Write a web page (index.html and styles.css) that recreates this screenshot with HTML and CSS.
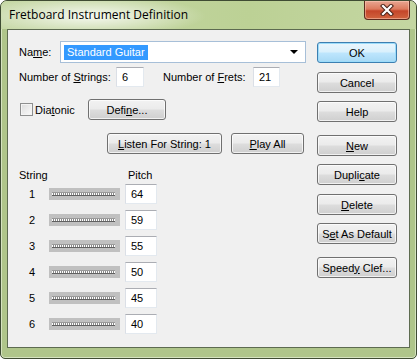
FILE: index.html
```html
<!DOCTYPE html>
<html>
<head>
<meta charset="utf-8">
<link rel="stylesheet" href="styles.css">
</head>
<body>
<div class="window">
  <div class="titlebar">
    <span class="title">Fretboard Instrument Definition</span>
    <div class="close">
      <svg width="16" height="12" viewBox="0 0 16 12">
        <path d="M4 2 L12 10 M12 2 L4 10" stroke="#4a2318" stroke-width="4.2" stroke-linecap="square" fill="none"/>
        <path d="M4 2 L12 10 M12 2 L4 10" stroke="#ffffff" stroke-width="2.2" stroke-linecap="square" fill="none"/>
      </svg>
    </div>
  </div>
  <div class="client">
    <div class="left">
      <div class="row name-row">
        <span class="lbl name-lbl">Na<u>m</u>e:</span>
        <div class="combo">
          <span class="sel">Standard Guitar</span>
          <span class="arrow"></span>
        </div>
      </div>
      <div class="row counts">
        <span class="lbl strings-lbl">Number of <u>S</u>trings:</span>
        <div class="field w-strings">6</div>
        <span class="lbl frets-lbl">Number of <u>F</u>rets:</span>
        <div class="field w-frets">21</div>
      </div>
      <div class="row diat">
        <span class="check"></span>
        <span class="lbl diat-lbl">Dia<u>t</u>onic</span>
        <div class="btn w-define"><span>Defi<u>n</u>e...</span></div>
      </div>
      <div class="row listen">
        <div class="btn w-listen"><span><u>L</u>isten For String: 1</span></div>
        <div class="btn w-play"><span><u>P</u>lay All</span></div>
      </div>
      <div class="row head">
        <span class="h-string">String</span>
        <span class="h-pitch">Pitch</span>
      </div>
      <div class="strings">
        <div class="srow"><span class="num">1</span><span class="slider"><span class="track"></span></span><div class="field pitch">64</div></div>
        <div class="srow"><span class="num">2</span><span class="slider"><span class="track"></span></span><div class="field pitch">59</div></div>
        <div class="srow"><span class="num">3</span><span class="slider"><span class="track"></span></span><div class="field pitch">55</div></div>
        <div class="srow"><span class="num">4</span><span class="slider"><span class="track"></span></span><div class="field pitch">50</div></div>
        <div class="srow"><span class="num">5</span><span class="slider"><span class="track"></span></span><div class="field pitch">45</div></div>
        <div class="srow"><span class="num">6</span><span class="slider"><span class="track"></span></span><div class="field pitch">40</div></div>
      </div>
    </div>
    <div class="right">
      <div class="btn default b-ok"><span>OK</span></div>
      <div class="btn b-cancel"><span>Cancel</span></div>
      <div class="btn b-help"><span>Help</span></div>
      <div class="btn b-new"><span><u>N</u>ew</span></div>
      <div class="btn b-dup"><span>Dupli<u>c</u>ate</span></div>
      <div class="btn b-del"><span><u>D</u>elete</span></div>
      <div class="btn b-set"><span>S<u>e</u>t As Default</span></div>
      <div class="btn b-speedy"><span>Speed<u>y</u> Clef...</span></div>
    </div>
  </div>
</div>
</body>
</html>
```

FILE: styles.css
```css
* { box-sizing: border-box; }
html, body { margin: 0; padding: 0; }
body {
  width: 417px;
  height: 359px;
  overflow: hidden;
  background: #ffffff;
  font-family: "Liberation Sans", Arial, sans-serif;
  font-size: 11px;
  color: #000;
}
u { text-decoration: underline; text-underline-offset: 1px; }

.window {
  width: 417px;
  height: 359px;
  border: 1px solid #3f4c33;
  border-radius: 7px 7px 5px 5px;
  background: #afc58a;
  box-shadow: inset 0 0 0 1px #d6e3c0;
  display: flex;
  flex-direction: column;
}
.titlebar {
  height: 28px;
  display: flex;
  justify-content: space-between;
  align-items: flex-start;
  border-radius: 6px 6px 0 0;
  background:
    radial-gradient(ellipse 115px 20px at 90px 15px, rgba(255,255,255,0.85), rgba(255,255,255,0)),
    linear-gradient(90deg, #c6d8a6, #bcd195 60%, #c4d6a2);
}
.title {
  font-family: "Open Sans", "Noto Sans", sans-serif;
  font-size: 12px;
  line-height: 16px;
  margin: 6px 0 0 8px;
  color: #000;
}
.close {
  width: 46px;
  height: 19px;
  margin-right: 6px;
  border: 1px solid #5b2b1f;
  border-top: none;
  border-radius: 0 0 4px 4px;
  background: linear-gradient(#e8a692 0%, #dc7a5e 45%, #c4462a 55%, #d0643f 100%);
  box-shadow: inset 0 0 0 1px rgba(255,210,190,0.5);
  display: flex;
  align-items: center;
  justify-content: center;
}

.client {
  flex: 1;
  margin: 0 6px 10px 6px;
  border: 1px solid #5d6b50;
  background: #f0f0f0;
  display: flex;
}
.left {
  width: 309px;
  padding: 11px 0 0 11px;
  display: flex;
  flex-direction: column;
}
.right {
  width: 80px;
  padding-top: 12px;
  display: flex;
  flex-direction: column;
}

.row { display: flex; align-items: center; }
.lbl { white-space: nowrap; }

.name-row { height: 22px; }
.name-lbl { width: 41px; }
.combo {
  width: 246px;
  height: 22px;
  border: 1px solid #a7bfd8;
  background: #fff;
  display: flex;
  align-items: center;
  justify-content: space-between;
  padding: 0 7px 0 3px;
}
.sel {
  background: #3399ff;
  color: #fff;
  padding: 1px 3px 1px 3px;
  line-height: 13px;
}
.arrow {
  width: 0;
  height: 0;
  border-left: 4px solid transparent;
  border-right: 4px solid transparent;
  border-top: 4px solid #000;
}

.field {
  height: 20px;
  background: #fff;
  border: 1px solid #e3e9ef;
  border-top-color: #abadb3;
  border-left-color: #dbdfe6;
  padding-left: 5px;
  display: flex;
  align-items: center;
}
.counts { margin-top: 4px; height: 20px; }
.strings-lbl { width: 97px; }
.w-strings { width: 28px; margin-right: 19px; }
.frets-lbl { width: 90px; }
.w-frets { width: 27px; }

.diat { margin-top: 12px; height: 21px; }
.check {
  width: 13px;
  height: 13px;
  margin-left: 1px;
  border: 1px solid #8e8f8f;
  background: linear-gradient(135deg, #dcdcdc, #fbfbfb);
  box-shadow: inset 0 0 0 1px #f4f4f4;
}
.diat-lbl { margin-left: 2px; width: 53px; }

.btn {
  height: 21px;
  border: 1px solid #707070;
  border-radius: 3px;
  background: linear-gradient(#f2f2f2 0%, #ebebeb 48%, #dddddd 52%, #cfcfcf 100%);
  box-shadow: inset 0 0 0 1px rgba(255,255,255,0.7);
  display: flex;
  align-items: center;
  justify-content: center;
  white-space: nowrap;
}
.btn.default {
  border-color: #3c7fb1;
  background: linear-gradient(#eaf6fd 0%, #d9f0fc 48%, #bee6fd 52%, #a7d9f5 100%);
  box-shadow: inset 0 0 0 1px #9cdcfa;
}
.w-define { width: 78px; }

.listen { margin-top: 13px; height: 21px; justify-content: flex-end; padding-right: 13px; }
.w-listen { width: 115px; margin-right: 9px; }
.w-play { width: 73px; }

.head { margin-top: 14px; height: 13px; }
.h-string { width: 109px; }

.strings { margin-top: 3px; display: flex; flex-direction: column; gap: 6px; }
.srow { height: 20px; display: flex; align-items: center; }
.num { width: 30px; padding-left: 10px; }
.slider {
  width: 71px;
  height: 12px;
  background: #c0c0c0;
  margin-right: 5px;
  padding: 4px 0 0 3px;
  display: flex;
  align-items: flex-start;
}
.track {
  width: 63px;
  height: 4px;
  border-top: 1px solid #9a9a9a;
  border-bottom: 1px solid #606060;
  background: repeating-linear-gradient(90deg, #ffffff 0 1px, #8a8a8a 1px 2px);
}
.pitch { width: 32px; }

.b-cancel { margin-top: 9px; }
.b-help { margin-top: 8px; }
.b-new { margin-top: 13px; }
.b-dup { margin-top: 8px; }
.b-del { margin-top: 9px; }
.b-set { margin-top: 8px; }
.b-speedy { margin-top: 13px; }
```
